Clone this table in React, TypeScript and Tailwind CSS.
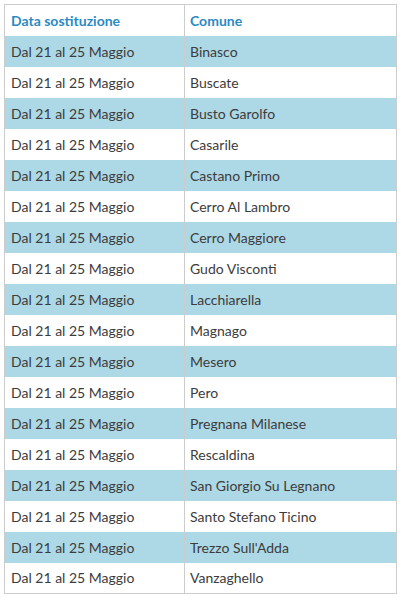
import React from "react";

const comuni = [
  "Binasco",
  "Buscate",
  "Busto Garolfo",
  "Casarile",
  "Castano Primo",
  "Cerro Al Lambro",
  "Cerro Maggiore",
  "Gudo Visconti",
  "Lacchiarella",
  "Magnago",
  "Mesero",
  "Pero",
  "Pregnana Milanese",
  "Rescaldina",
  "San Giorgio Su Legnano",
  "Santo Stefano Ticino",
  "Trezzo Sull'Adda",
  "Vanzaghello",
];

export default function App() {
  return (
    <div className="bg-white w-[402px] h-[598px] pt-[4px] pl-[4px]" style={{ fontFamily: "Lato, 'Open Sans', sans-serif" }}>
      <table className="w-[393px] border-collapse border border-[#cccccc] text-[14px] text-[#3c3c3c]">
        <thead>
          <tr className="h-[31px] bg-white">
            <th className="text-left font-bold text-[#2b8ac4] pl-[6px] w-[180px] border-r border-[#cccccc]">Data sostituzione</th>
            <th className="text-left font-bold text-[#2b8ac4] pl-[5px]">Comune</th>
          </tr>
        </thead>
        <tbody>
          {comuni.map((c, i) => (
            <tr key={c} className={i % 2 === 0 ? "h-[31px] bg-[#add8e6]" : "h-[31px] bg-white"}>
              <td className="pl-[6px] border-r border-[#cccccc]">Dal 21 al 25 Maggio</td>
              <td className="pl-[5px]">{c}</td>
            </tr>
          ))}
        </tbody>
      </table>
    </div>
  );
}
